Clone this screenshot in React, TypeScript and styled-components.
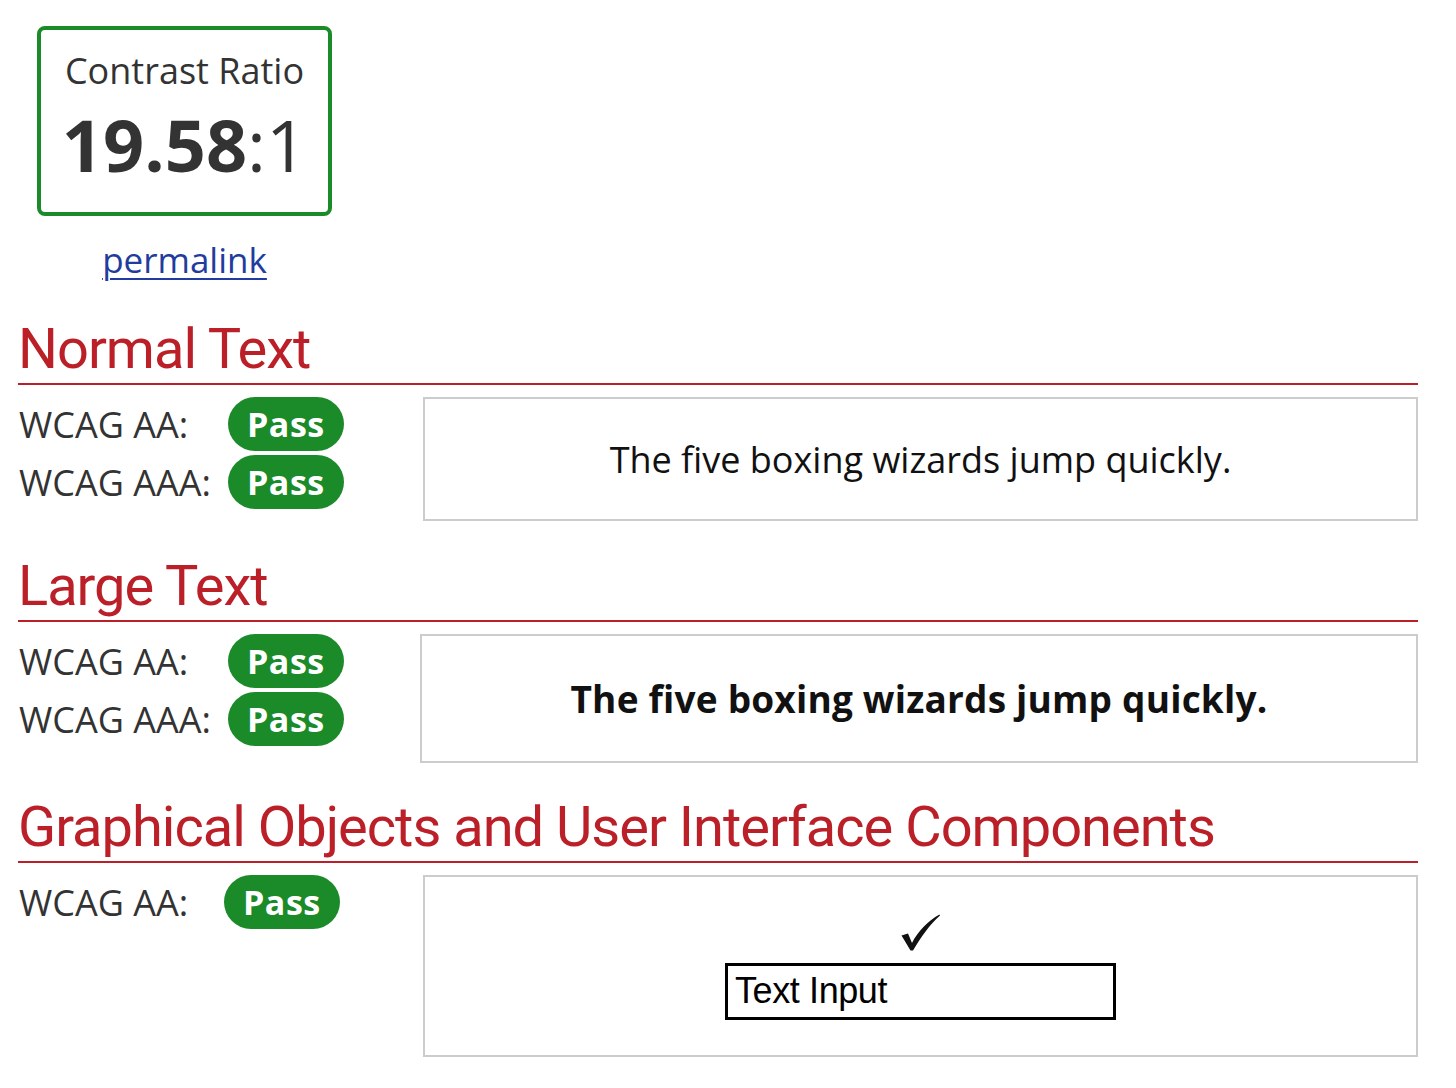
import React from "react";
import styled, { createGlobalStyle } from "styled-components";

const green = "#1b8a29";
const red = "#bb1f27";

const GlobalStyle = createGlobalStyle`
  body {
    margin: 0;
    background: #fff;
    font-family: "Open Sans", sans-serif;
    color: #333;
  }
`;

const Page = styled.main`
  width: 1400px;
  padding: 26px 0 0 18px;
`;

const Summary = styled.div`
  width: 295px;
  margin-left: 19px;
  display: flex;
  flex-direction: column;
  align-items: center;
`;

const RatioCard = styled.div`
  box-sizing: border-box;
  width: 295px;
  height: 190px;
  border: 4px solid ${green};
  border-radius: 8px;
  padding-top: 19px;
  display: flex;
  flex-direction: column;
  align-items: center;
`;

const CardLabel = styled.div`
  font-size: 36px;
  line-height: 44px;
`;

const CardValue = styled.div`
  margin-top: 11px;
  font-size: 72px;
  line-height: 80px;
  font-weight: 700;

  span {
    font-weight: 400;
  }
`;

const Permalink = styled.a`
  margin-top: 20px;
  font-size: 35px;
  line-height: 48px;
  color: #1f3c9e;
  text-decoration: underline;
  text-decoration-thickness: 2px;
  text-underline-offset: 5px;
`;

const Heading = styled.h2<{ $gap: number }>`
  margin: ${(p) => p.$gap}px 0 0;
  padding: 0 0 6px;
  font-family: Roboto, sans-serif;
  font-weight: 400;
  font-size: 56px;
  line-height: 56px;
  letter-spacing: -1px;
  color: ${red};
  border-bottom: 2px solid ${red};
`;

const Row = styled.div`
  display: flex;
  align-items: flex-start;
  margin-top: 12px;
`;

const Results = styled.div<{ $width: number }>`
  width: ${(p) => p.$width}px;
  flex: none;
  display: flex;
  flex-direction: column;
  gap: 4px;
`;

const ResultLine = styled.div<{ $labelWidth: number }>`
  display: grid;
  grid-template-columns: ${(p) => p.$labelWidth}px auto;
  align-items: center;
  justify-items: start;
`;

const Label = styled.span`
  padding-left: 1px;
  font-size: 36px;
  color: #333;
`;

const Badge = styled.span`
  box-sizing: border-box;
  height: 54px;
  padding: 0 19px;
  border-radius: 27px;
  background: ${green};
  color: #fff;
  font-size: 34px;
  font-weight: 700;
  line-height: 54px;
  letter-spacing: 0.5px;
`;

const Sample = styled.div<{ $height: number }>`
  box-sizing: border-box;
  flex: 1;
  height: ${(p) => p.$height}px;
  border: 2px solid #ccc;
  display: flex;
  flex-direction: column;
  align-items: center;
  justify-content: center;
`;

const SampleText = styled.p<{ $bold?: boolean }>`
  margin: 0;
  color: #111;
  font-size: ${(p) => (p.$bold ? 37 : 36)}px;
  font-weight: ${(p) => (p.$bold ? 700 : 400)};
  letter-spacing: ${(p) => (p.$bold ? 0.2 : 0)}px;
`;

const Check = styled.svg`
  width: 41px;
  height: 38px;
  margin-bottom: 12px;
`;

const TextInput = styled.div`
  box-sizing: border-box;
  width: 391px;
  height: 57px;
  border: 3px solid #000;
  padding-left: 7px;
  font-family: "Liberation Sans", Arial, sans-serif;
  font-size: 36px;
  line-height: 50px;
  color: #000;
  letter-spacing: -0.4px;
`;

type Result = { label: string; status: string };

const ResultList = ({
  items,
  width,
  labelWidth,
}: {
  items: Result[];
  width: number;
  labelWidth: number;
}) => (
  <Results $width={width}>
    {items.map((r) => (
      <ResultLine key={r.label} $labelWidth={labelWidth}>
        <Label>{r.label}</Label>
        <Badge>{r.status}</Badge>
      </ResultLine>
    ))}
  </Results>
);

const textResults: Result[] = [
  { label: "WCAG AA:", status: "Pass" },
  { label: "WCAG AAA:", status: "Pass" },
];

export default function App() {
  return (
    <>
      <GlobalStyle />
      <Page>
        <Summary>
          <RatioCard>
            <CardLabel>Contrast Ratio</CardLabel>
            <CardValue>
              19.58<span>:1</span>
            </CardValue>
          </RatioCard>
          <Permalink href="#">permalink</Permalink>
        </Summary>

        <Heading $gap={37}>Normal Text</Heading>
        <Row>
          <ResultList items={textResults} width={405} labelWidth={210} />
          <Sample $height={124}>
            <SampleText>The five boxing wizards jump quickly.</SampleText>
          </Sample>
        </Row>

        <Heading $gap={37}>Large Text</Heading>
        <Row>
          <ResultList items={textResults} width={402} labelWidth={210} />
          <Sample $height={129}>
            <SampleText $bold>The five boxing wizards jump quickly.</SampleText>
          </Sample>
        </Row>

        <Heading $gap={36}>Graphical Objects and User Interface Components</Heading>
        <Row>
          <ResultList
            items={[{ label: "WCAG AA:", status: "Pass" }]}
            width={405}
            labelWidth={206}
          />
          <Sample $height={182}>
            <Check viewBox="0 0 41 38">
              <path
                d="M1.5 22.5 L8 20.5 L12 30 C18 18 28 8 39.5 1.5 L40 2.5 C30 11 21 24 13 37.5 L10.5 37.5 Z"
                fill="#111"
              />
            </Check>
            <TextInput>Text Input</TextInput>
          </Sample>
        </Row>
      </Page>
    </>
  );
}
